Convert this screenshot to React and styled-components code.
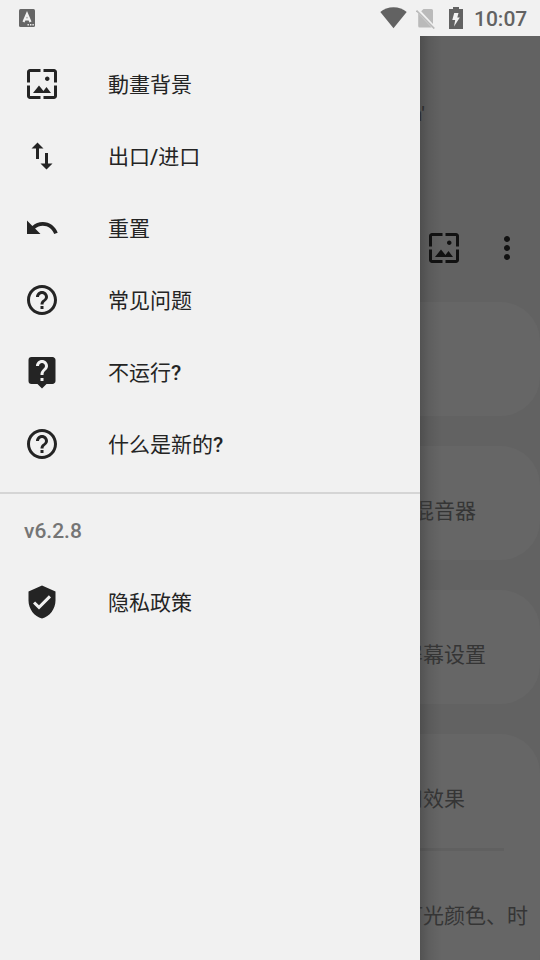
import React from 'react'
import styled, { createGlobalStyle } from 'styled-components'
import {
    MdWallpaper,
    MdImportExport,
    MdUndo,
    MdHelpOutline,
    MdLiveHelp,
    MdVerifiedUser,
    MdMoreVert,
} from 'react-icons/md'

const menuItems = [
    { icon: MdWallpaper, text: '動畫背景' },
    { icon: MdImportExport, text: '出口/进口' },
    { icon: MdUndo, text: '重置' },
    { icon: MdHelpOutline, text: '常见问题' },
    { icon: MdLiveHelp, text: '不运行?' },
    { icon: MdHelpOutline, text: '什么是新的?' },
]

// chinese stays regular, latin characters are medium
const Label = ({ children }) => (
    <MenuLabel>
        {children.split(/([/?])/).map((part, i) =>
            i % 2 ? <Latin key={i}>{part}</Latin> : part
        )}
    </MenuLabel>
)

const MenuItem = ({ icon: Icon, text }) => (
    <MenuRow>
        <Icon size={36} />
        <Label>{text}</Label>
    </MenuRow>
)

const StatusBar = () => (
    <StatusBarContainer>
        <svg width="16" height="18" viewBox="0 0 16 18">
            <rect width="16" height="18" rx="1.5" fill="#666" />
            <path d="M4.500 13L8 4.800l3.500 8.200M5.800 10.400h4.400" fill="none" stroke="#f1f1f1" strokeWidth="2.200" />
            <path d="M8.500 15h1.400v1.400H8.500zM11 15h1.400v1.400H11zM13.400 15h1.400v1.400h-1.400z" fill="#f1f1f1" />
        </svg>
        <StatusIcons>
            <svg width="28" height="22" viewBox="0 0 28 22">
                <path d="M13.500 21.300L.3 4.900C3.700 2 8.500.2 13.500.2s9.800 1.800 13.200 4.700z" fill="#626262" />
            </svg>
            <svg width="20" height="22" viewBox="0 0 20 22">
                <path d="M7.500 2H15.500Q17 2 17 3.500V17L5.200 4.300zM2.200 6.500L15.800 20.500H3.700Q2.200 20.500 2.200 19z" fill="#bababa" />
                <path d="M.5 3.500L18.300 21.500" stroke="#bababa" strokeWidth="1.700" />
            </svg>
            <svg width="14" height="22" viewBox="0 0 14 22">
                <path d="M4 0h6v2h4v20H0V2h4z" fill="#626262" />
                <path d="M5.200 6H9.500L8.300 10.500H10.800L5 19.500L6.200 13H3.300z" fill="#f1f1f1" />
            </svg>
            <Clock>10:07</Clock>
        </StatusIcons>
    </StatusBarContainer>
)

const App = () => {
    return (
        <Screen>
            <GlobalStyle />
            <StatusBar />
            <Content>
                <Drawer>
                    {menuItems.map((item) => (
                        <MenuItem key={item.text} {...item} />
                    ))}
                    <Divider />
                    <Version>v6.2.8</Version>
                    <MenuItem icon={MdVerifiedUser} text="隐私政策" />
                </Drawer>
                <Page>
                    <Hint>on'</Hint>
                    <Toolbar>
                        <MdWallpaper size={36} />
                        <MdMoreVert size={36} />
                    </Toolbar>
                    <Cards>
                        <Card />
                        <Card>
                            <CardText $right={64}>混音器</CardText>
                        </Card>
                        <Card>
                            <CardText $right={54}>屏幕设置</CardText>
                        </Card>
                        <Card $tall>
                            <CardText $right={75}>和效果</CardText>
                            <CardLine />
                            <CardText $right={12}>灯光颜色、时</CardText>
                        </Card>
                    </Cards>
                </Page>
            </Content>
        </Screen>
    )
}

export default App

const GlobalStyle = createGlobalStyle`
    * {
        box-sizing: border-box;
    }
    body {
        margin: 0;
    }
    svg {
        display: block;
        flex-shrink: 0;
    }
`

const Screen = styled.div`
    width: 540px;
    height: 960px;
    overflow: hidden;
    display: flex;
    flex-direction: column;
    background: #f1f1f1;
    font-family: Roboto, "Noto Sans CJK SC", sans-serif;
    font-size: 21px;
    color: #242424;
`

const StatusBarContainer = styled.header`
    flex: 0 0 36px;
    display: flex;
    align-items: center;
    justify-content: space-between;
    padding: 0 12px 0 19px;
`

const StatusIcons = styled.div`
    display: flex;
    align-items: center;
    height: 34px;

    svg:nth-child(2) {
        margin-left: 8px;
    }
    svg:nth-child(3) {
        margin-left: 13px;
    }
`

const Clock = styled.span`
    width: 54px;
    margin-left: 11px;
    font-weight: 500;
    line-height: 24px;
    padding-top: 1px;
    color: #626262;
`

const Content = styled.div`
    flex: 1;
    display: flex;
    min-height: 0;
`

const Drawer = styled.nav`
    flex: 0 0 420px;
    padding-top: 12px;
    background: #f1f1f1;
`

const MenuRow = styled.div`
    height: 72px;
    display: flex;
    align-items: center;
    gap: 48px;
    padding-left: 24px;
    line-height: 30px;
`

const MenuLabel = styled.span`
    padding-top: 2px;
`

const Latin = styled.span`
    font-weight: 500;
`

const Divider = styled.div`
    height: 2px;
    margin: 12px 0 0;
    background: #d5d5d5;
`

const Version = styled.div`
    height: 72px;
    line-height: 74px;
    padding-left: 24px;
    font-weight: 500;
    color: #757575;
`

const Page = styled.main`
    flex: 1;
    min-width: 0;
    overflow: hidden;
    display: flex;
    flex-direction: column;
    background:
        linear-gradient(90deg, rgba(0, 0, 0, .2), rgba(0, 0, 0, .08) 9px, rgba(0, 0, 0, 0) 22px),
        #626262;
`

const Hint = styled.div`
    flex: 0 0 193px;
    padding: 63px 115px 0 0;
    line-height: 30px;
    display: flex;
    justify-content: flex-end;
    color: #2c2c2c;
`

const Toolbar = styled.div`
    flex: 0 0 73px;
    display: flex;
    justify-content: space-between;
    align-items: flex-start;
    padding: 1px 15px 0 6px;
    color: #111;
`

const Cards = styled.div`
    display: flex;
    flex-direction: column;
    gap: 30px;
`

const Card = styled.section`
    flex: 0 0 ${(props) => (props.$tall ? 260 : 114)}px;
    padding-top: 50px;
    border-radius: 0 39px 39px 0;
    background: rgba(255, 255, 255, .028);
    color: #353535;
`

const CardText = styled.div`
    display: flex;
    justify-content: flex-end;
    padding-right: ${(props) => props.$right}px;
    line-height: 30px;
    white-space: nowrap;
`

const CardLine = styled.div`
    height: 3px;
    margin: 34px 36px 50px 0;
    background: rgba(0, 0, 0, .06);
`
